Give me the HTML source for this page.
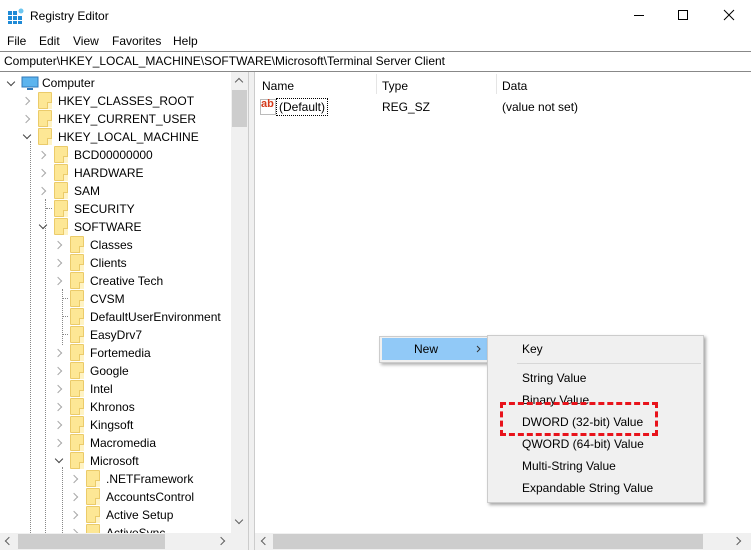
<!DOCTYPE html>
<html><head><style>
*{margin:0;padding:0;box-sizing:border-box}
body{width:751px;height:550px;overflow:hidden;background:#fff;font-family:"Liberation Sans",Arial,sans-serif;font-size:12px;color:#000;position:relative}
.a{position:absolute;white-space:nowrap}
.r{position:absolute;height:18px;line-height:18px;white-space:nowrap}
.f{position:absolute;width:14px;height:17px;background:#fde795;border:1px solid #ebcb6a;border-radius:1px}
.f:after{content:"";position:absolute;right:-1px;bottom:-1px;width:4px;height:6px;border-left:1px solid #ebcb6a;border-top:1px solid #ebcb6a;background:#fff3c4}
.c{position:absolute;width:6px;height:6px;border-right:1.3px solid #a8a8a8;border-bottom:1.3px solid #a8a8a8;transform:rotate(-45deg);background:#fff}
.d{position:absolute;width:6px;height:6px;border-right:1.3px solid #444;border-bottom:1.3px solid #444;transform:rotate(45deg)}
.vl{position:absolute;border-left:1px dotted #888;width:0}
.hl{position:absolute;border-top:1px dotted #888;height:0;width:6px}
.m{position:absolute;left:522px}
</style></head><body>
<!-- title -->
<svg class="a" style="left:8px;top:8px" width="16" height="16"><g fill="#1e8ad6"><rect x="0" y="3" width="4" height="4"/><rect x="5" y="3" width="4" height="4"/><rect x="0" y="8" width="4" height="4"/><rect x="5" y="8" width="4" height="4"/><rect x="10" y="8" width="4" height="4"/><rect x="0" y="13" width="4" height="3"/><rect x="5" y="13" width="4" height="3"/><rect x="10" y="13" width="4" height="3"/></g><circle cx="13" cy="3" r="2.5" fill="#6cc6f0"/></svg>
<div class="a" style="left:30px;top:9px">Registry Editor</div>
<div class="a" style="left:634px;top:15px;width:10px;border-top:1px solid #000"></div>
<div class="a" style="left:678px;top:10px;width:10px;height:10px;border:1px solid #000"></div>
<svg class="a" style="left:723px;top:9px" width="12" height="12"><path d="M1 1L11 11M11 1L1 11" stroke="#000" stroke-width="1"/></svg>
<!-- menu -->
<div class="a" style="left:7px;top:34px">File</div>
<div class="a" style="left:39px;top:34px">Edit</div>
<div class="a" style="left:73px;top:34px">View</div>
<div class="a" style="left:112px;top:34px">Favorites</div>
<div class="a" style="left:173px;top:34px">Help</div>
<!-- address -->
<div class="a" style="left:0;top:51px;width:751px;height:21px;border-top:1px solid #888;border-bottom:1px solid #888"></div>
<div class="a" style="left:4px;top:54px">Computer\HKEY_LOCAL_MACHINE\SOFTWARE\Microsoft\Terminal Server Client</div>
<!-- panes border -->
<div class="a" style="left:248px;top:72px;width:7px;height:478px;background:#f0f0f0;border-left:1px solid #ccc;border-right:1px solid #ccc"></div>
<!-- tree -->
<div class="a" style="left:0;top:1px;width:231px;height:532px;overflow:hidden">
<div class="vl" style="left:30px;top:140px;height:400px"></div>
<div class="vl" style="left:45px;top:198px;height:340px"></div>
<div class="hl" style="left:46px;top:207px"></div>
<div class="vl" style="left:62px;top:288px;height:56px"></div>
<div class="hl" style="left:62px;top:297px"></div>
<div class="hl" style="left:62px;top:315px"></div>
<div class="hl" style="left:62px;top:333px"></div>
<div class="vl" style="left:62px;top:466px;height:70px"></div>
<div class="d" style="left:8px;top:78px"></div>
<svg class="a" style="left:21px;top:75px" width="18" height="15"><rect x="1" y="1" width="16" height="10" fill="#5cb4ee" stroke="#3178b8"/><rect x="6" y="12" width="6" height="2" fill="#3178b8"/></svg>
<div class="r" style="left:42px;top:73px">Computer</div>
<div class="c" style="left:23px;top:97px"></div><div class="f" style="left:38px;top:91px"></div><div class="r" style="left:58px;top:91px">HKEY_CLASSES_ROOT</div>
<div class="c" style="left:23px;top:115px"></div><div class="f" style="left:38px;top:109px"></div><div class="r" style="left:58px;top:109px">HKEY_CURRENT_USER</div>
<div class="d" style="left:24px;top:131px"></div><div class="f" style="left:38px;top:127px"></div><div class="r" style="left:58px;top:127px">HKEY_LOCAL_MACHINE</div>
<div class="c" style="left:39px;top:151px"></div><div class="f" style="left:54px;top:145px"></div><div class="r" style="left:74px;top:145px">BCD00000000</div>
<div class="c" style="left:39px;top:169px"></div><div class="f" style="left:54px;top:163px"></div><div class="r" style="left:74px;top:163px">HARDWARE</div>
<div class="c" style="left:39px;top:187px"></div><div class="f" style="left:54px;top:181px"></div><div class="r" style="left:74px;top:181px">SAM</div>
<div class="f" style="left:54px;top:199px"></div><div class="r" style="left:74px;top:199px">SECURITY</div>
<div class="d" style="left:40px;top:221px;background:#fff"></div><div class="f" style="left:54px;top:217px"></div><div class="r" style="left:74px;top:217px">SOFTWARE</div>
<div class="c" style="left:55px;top:241px"></div><div class="f" style="left:70px;top:235px"></div><div class="r" style="left:90px;top:235px">Classes</div>
<div class="c" style="left:55px;top:259px"></div><div class="f" style="left:70px;top:253px"></div><div class="r" style="left:90px;top:253px">Clients</div>
<div class="c" style="left:55px;top:277px"></div><div class="f" style="left:70px;top:271px"></div><div class="r" style="left:90px;top:271px">Creative Tech</div>
<div class="f" style="left:70px;top:289px"></div><div class="r" style="left:90px;top:289px">CVSM</div>
<div class="f" style="left:70px;top:307px"></div><div class="r" style="left:90px;top:307px">DefaultUserEnvironment</div>
<div class="f" style="left:70px;top:325px"></div><div class="r" style="left:90px;top:325px">EasyDrv7</div>
<div class="c" style="left:55px;top:349px"></div><div class="f" style="left:70px;top:343px"></div><div class="r" style="left:90px;top:343px">Fortemedia</div>
<div class="c" style="left:55px;top:367px"></div><div class="f" style="left:70px;top:361px"></div><div class="r" style="left:90px;top:361px">Google</div>
<div class="c" style="left:55px;top:385px"></div><div class="f" style="left:70px;top:379px"></div><div class="r" style="left:90px;top:379px">Intel</div>
<div class="c" style="left:55px;top:403px"></div><div class="f" style="left:70px;top:397px"></div><div class="r" style="left:90px;top:397px">Khronos</div>
<div class="c" style="left:55px;top:421px"></div><div class="f" style="left:70px;top:415px"></div><div class="r" style="left:90px;top:415px">Kingsoft</div>
<div class="c" style="left:55px;top:439px"></div><div class="f" style="left:70px;top:433px"></div><div class="r" style="left:90px;top:433px">Macromedia</div>
<div class="d" style="left:56px;top:455px;background:#fff"></div><div class="f" style="left:70px;top:451px"></div><div class="r" style="left:90px;top:451px">Microsoft</div>
<div class="c" style="left:71px;top:475px"></div><div class="f" style="left:86px;top:469px"></div><div class="r" style="left:106px;top:469px">.NETFramework</div>
<div class="c" style="left:71px;top:493px"></div><div class="f" style="left:86px;top:487px"></div><div class="r" style="left:106px;top:487px">AccountsControl</div>
<div class="c" style="left:71px;top:511px"></div><div class="f" style="left:86px;top:505px"></div><div class="r" style="left:106px;top:505px">Active Setup</div>
<div class="c" style="left:71px;top:529px"></div><div class="f" style="left:86px;top:523px"></div><div class="r" style="left:106px;top:523px">ActiveSync</div>
</div>
<!-- tree vertical scrollbar -->
<div class="a" style="left:231px;top:72px;width:17px;height:461px;background:#f0f0f0"></div>
<div class="a" style="left:232px;top:90px;width:15px;height:37px;background:#cdcdcd"></div>
<div class="c" style="left:236px;top:79px;transform:rotate(-135deg);border-color:#606060;background:none"></div>
<div class="d" style="left:236px;top:517px;border-color:#606060"></div>
<!-- bottom scrollbars -->
<div class="a" style="left:0;top:533px;width:248px;height:17px;background:#f0f0f0"></div>
<div class="a" style="left:18px;top:534px;width:147px;height:15px;background:#cdcdcd"></div>
<div class="c" style="left:6px;top:538px;transform:rotate(135deg);border-color:#606060;background:none"></div>
<div class="c" style="left:218px;top:538px;border-color:#606060;background:none"></div>
<div class="a" style="left:255px;top:533px;width:496px;height:17px;background:#f0f0f0"></div>
<div class="a" style="left:273px;top:534px;width:430px;height:15px;background:#cdcdcd"></div>
<div class="c" style="left:262px;top:538px;transform:rotate(135deg);border-color:#606060;background:none"></div>
<div class="c" style="left:734px;top:538px;border-color:#606060;background:none"></div>
<!-- right pane -->
<div class="a" style="left:262px;top:79px">Name</div>
<div class="a" style="left:376px;top:74px;height:20px;border-left:1px solid #e5e5e5"></div>
<div class="a" style="left:382px;top:79px">Type</div>
<div class="a" style="left:496px;top:74px;height:20px;border-left:1px solid #e5e5e5"></div>
<div class="a" style="left:502px;top:79px">Data</div>
<div class="a" style="left:260px;top:99px;width:16px;height:16px;border:1px solid #bbb;background:#fff"></div>
<div class="a" style="left:261px;top:98px;color:#d43a1a;font-weight:bold;font-size:11px">ab</div>
<div class="a" style="left:276px;top:98px;height:18px;line-height:16px;border:1px dotted #000;padding:0 2px">(Default)</div>
<div class="a" style="left:382px;top:100px">REG_SZ</div>
<div class="a" style="left:502px;top:100px">(value not set)</div>
<!-- context menu -->
<div class="a" style="left:379px;top:336px;width:110px;height:27px;background:#f0f0f0;border:1px solid #ccc;box-shadow:2px 2px 3px rgba(0,0,0,.3)"></div>
<div class="a" style="left:382px;top:338px;width:106px;height:22px;background:#91c9f7"></div>
<div class="a" style="left:414px;top:342px">New</div>
<svg class="a" style="left:476px;top:345px" width="6" height="8"><path d="M1 1L4 4L1 7" fill="none" stroke="#333" stroke-width="1"/></svg>
<div class="a" style="left:487px;top:335px;width:217px;height:168px;background:#f0f0f0;border:1px solid #ccc;box-shadow:2px 2px 3px rgba(0,0,0,.35)"></div>
<div class="a" style="left:517px;top:363px;width:184px;border-top:1px solid #d7d7d7"></div>
<div class="m a" style="top:342px">Key</div>
<div class="m a" style="top:371px">String Value</div>
<div class="m a" style="top:393px">Binary Value</div>
<div class="m a" style="top:415px">DWORD (32-bit) Value</div>
<div class="m a" style="top:437px">QWORD (64-bit) Value</div>
<div class="m a" style="top:459px">Multi-String Value</div>
<div class="m a" style="top:481px">Expandable String Value</div>
<div class="a" style="left:500px;top:402px;width:158px;height:34px;border:3px dashed #e8131b"></div>
</body></html>
